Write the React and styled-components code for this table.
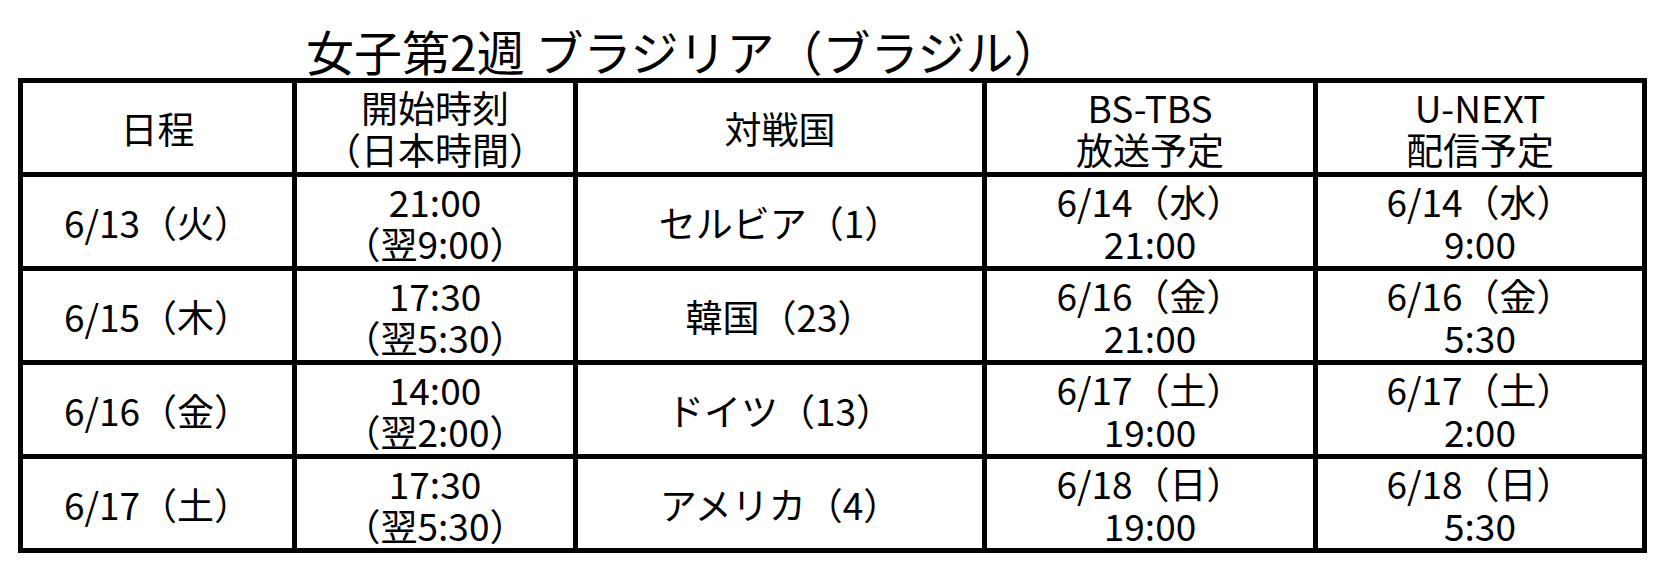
import React from 'react'
import { styled, createGlobalStyle } from 'styled-components'

const GlobalStyle = createGlobalStyle`
  html, body {
    margin: 0;
    padding: 0;
    background: #ffffff;
  }
  body {
    font-family: "Noto Sans CJK JP", "Noto Sans", sans-serif;
    color: #000000;
  }
`

const columns = [274, 281, 409, 331, 329]

const headers = [
  ['日程'],
  ['開始時刻', '（日本時間）'],
  ['対戦国'],
  ['BS-TBS', '放送予定'],
  ['U-NEXT', '配信予定'],
]

const rows = [
  [['6/13（火）'], ['21:00', '（翌9:00）'], ['セルビア（1）'], ['6/14（水）', '21:00'], ['6/14（水）', '9:00']],
  [['6/15（木）'], ['17:30', '（翌5:30）'], ['韓国（23）'], ['6/16（金）', '21:00'], ['6/16（金）', '5:30']],
  [['6/16（金）'], ['14:00', '（翌2:00）'], ['ドイツ（13）'], ['6/17（土）', '19:00'], ['6/17（土）', '2:00']],
  [['6/17（土）'], ['17:30', '（翌5:30）'], ['アメリカ（4）'], ['6/18（日）', '19:00'], ['6/18（日）', '5:30']],
]

const App = () => {
  return (
    <Page>
      <GlobalStyle />
      <Title>女子第2週 ブラジリア（ブラジル）</Title>
      <Table>
        <colgroup>
          {columns.map((w, i) => <col key={i} style={{ width: w }} />)}
        </colgroup>
        <thead>
          <Row>
            {headers.map((lines, i) => (
              <Cell as="th" key={i}>
                {lines.map((l, j) => <Line key={j}>{l}</Line>)}
              </Cell>
            ))}
          </Row>
        </thead>
        <tbody>
          {rows.map((cells, r) => (
            <Row key={r}>
              {cells.map((lines, i) => (
                <Cell key={i}>
                  {lines.map((l, j) => <Line key={j}>{l}</Line>)}
                </Cell>
              ))}
            </Row>
          ))}
        </tbody>
      </Table>
    </Page>
  )
}

const Page = styled.div`
  width: 1663px;
  height: 573px;
  box-sizing: border-box;
  padding-left: 18px;
  background: #ffffff;
`

const Title = styled.h1`
  margin: 0;
  height: 78px;
  box-sizing: border-box;
  padding-left: 288px;
  padding-top: 22px;
  font-size: 48px;
  font-weight: 400;
  line-height: 56px;
  white-space: nowrap;
`

const Table = styled.table`
  width: 1629px;
  border-collapse: collapse;
  table-layout: fixed;
  border: 5px solid #000000;
`

const Row = styled.tr`
  height: 94px;
`

const Cell = styled.td`
  border: 5px solid #000000;
  padding: 0;
  text-align: center;
  vertical-align: middle;
  font-size: 37px;
  font-weight: 400;
  line-height: 42px;
  white-space: nowrap;
`

const Line = styled.div`
  display: block;
`

export default App
